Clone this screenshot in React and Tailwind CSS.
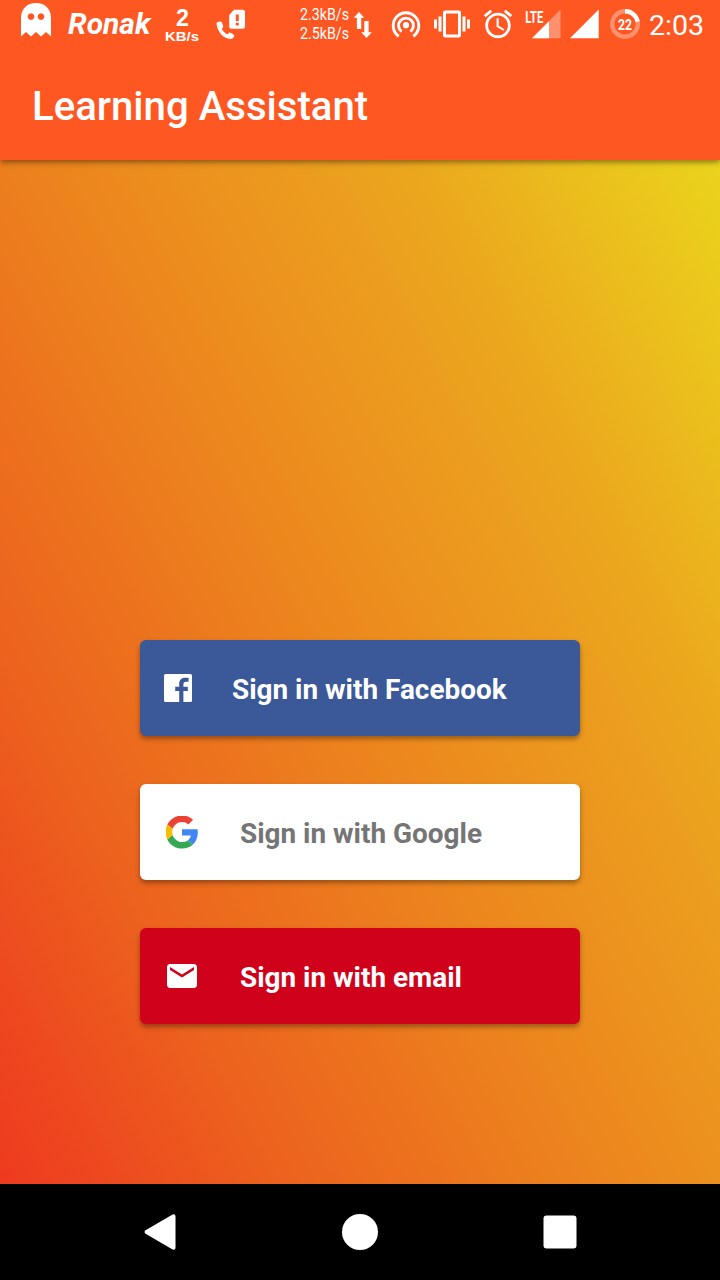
import { MdVibration, MdAlarm, MdEmail } from "react-icons/md";

function Ghost() {
  return (
    <svg className="ml-[21px] h-[48px] w-[30px] shrink-0" viewBox="0 0 30 48" fill="#fff">
      <path fillRule="evenodd" d="M0 36.500V18C0 9 6 3 15 3s15 6 15 15v18.500l-5-4.500-5 4.500-5-4.500-5 4.500-5-4.500zM10 13.200a3.400 3.400 0 1 0 .01 0zM20 13.200a3.400 3.400 0 1 0 .01 0z" />
    </svg>
  );
}

function NetSpeed() {
  return (
    <svg className="ml-[12px] h-[48px] w-[36px] shrink-0" viewBox="0 0 36 48" fill="#fff" fontFamily="Liberation Sans, sans-serif">
      <text x="12" y="25.800" fontSize="24.500" fontWeight="700" textLength="13" lengthAdjust="spacingAndGlyphs">2</text>
      <text x="1" y="41" fontSize="13.500" fontWeight="700" textLength="34" lengthAdjust="spacingAndGlyphs">KB/s</text>
    </svg>
  );
}

function CallSim() {
  return (
    <svg className="ml-[16px] h-[48px] w-[30px] shrink-0" viewBox="0 0 30 48" fill="#fff">
      <path fillRule="evenodd" d="M18 9.800H26.500q2.500 0 2.500 2.200V26.500q0 2.300-2.500 2.300H15.500q-2.300 0-2.300-2.300V15zM19.800 14.500v6.500h3v-6.500zM19.800 22.800v2.800h3v-2.800z" />
      <path d="M2.500 21.800l2-.3q1 0 1.400 1l1.300 3.600q.2.900-.4 1.500l-1 1.600q2.200 3.400 5.200 5.200l2-1.500q.7-.5 1.500-.1l3 1.600q.9.600.7 1.600l-.8 1.600q-.8 1.400-2.600 1.400-6.200-.2-10.200-5.200Q1 29.300.4 23.800q0-1.700 2.100-2z" />
    </svg>
  );
}

function Arrows() {
  return (
    <svg className="ml-[3px] h-[48px] w-[20px] shrink-0" viewBox="0 0 20 48" fill="#fff">
      <path d="M6 12L11.300 17.800H8.200V29H3.900V17.800H.7zM13.500 38L8.200 32.200h3.100V21h4.300v11.200h3.200z" />
    </svg>
  );
}

function Hotspot() {
  return (
    <svg className="ml-[18px] h-[48px] w-[30px] shrink-0" viewBox="0 0 30 48" fill="none" stroke="#fff" strokeWidth="2.900">
      <circle cx="15" cy="25.200" r="3.100" fill="#fff" stroke="none" />
      <path d="M10.700 31.500a7.400 7.400 0 1 1 8.600 0M7.800 36.200a12.800 12.800 0 1 1 14.400 0" />
    </svg>
  );
}

function Signals() {
  return (
    <svg className="ml-[10px] h-[48px] w-[76px] shrink-0" viewBox="0 0 76 48" fill="#fff">
      <path d="M35.500 9.500V38.200H7z" opacity=".35" />
      <path d="M24 21.200V38.200H7zM73.700 9.500V38.200H45z" />
      <path d="M0 9h19v14.500H0z" fill="#ff5722" />
      <text x="0.300" y="22.500" fontFamily="Roboto" fontWeight="700" fontSize="17" textLength="18" lengthAdjust="spacingAndGlyphs">LTE</text>
    </svg>
  );
}

function Battery() {
  return (
    <svg className="ml-[9px] h-[48px] w-[30px] shrink-0" viewBox="0 0 30 48" fill="none">
      <circle cx="15" cy="24" r="12.800" stroke="#fff" strokeOpacity=".35" strokeWidth="4.400" />
      <path d="M15 11.200A12.800 12.800 0 0 1 27.600 21.600" stroke="#fff" strokeWidth="4.400" />
      <text x="15" y="30" fill="#fff" textAnchor="middle" fontFamily="Roboto" fontWeight="700" fontSize="14.500" textLength="14" lengthAdjust="spacingAndGlyphs">22</text>
    </svg>
  );
}

function StatusBar() {
  return (
    <div className="flex h-[48px] items-center text-white">
      <Ghost />
      <span className="ml-[17px] w-[84px] shrink-0 text-[30px] leading-[48px] font-bold italic whitespace-nowrap">Ronak</span>
      <NetSpeed />
      <CallSim />
      <div className="ml-[54px] w-[50px] shrink-0 text-[16px] leading-[19px]">
        <div className="w-max origin-left scale-x-[.89]">2.3kB/s</div>
        <div className="w-max origin-left scale-x-[.89]">2.5kB/s</div>
      </div>
      <Arrows />
      <Hotspot />
      <MdVibration className="ml-[13px] shrink-0" size={36} />
      <MdAlarm className="ml-[11px] shrink-0" size={34} />
      <Signals />
      <Battery />
      <span className="ml-[9px] pt-[3px] text-[28.500px] leading-[50px]">2:03</span>
    </div>
  );
}

function FacebookIcon() {
  return (
    <svg className="ml-[24px] size-[28px]" viewBox="0 0 28 28" fill="#fff">
      <path d="M1.600 0H26.400Q28 0 28 1.600V26.400Q28 28 26.400 28H19.400V17h4.400V12.800H19.400V10.500c0-1.700.8-2.700 2.600-2.700H24.600V3.800H21c-3.600 0-5.800 2.400-5.800 6v3H11.200V17h4v11H1.600Q0 28 0 26.400V1.600Q0 0 1.600 0z" />
    </svg>
  );
}

function GoogleIcon() {
  return (
    <svg className="ml-[25px] size-[34px] p-[0.500px]" viewBox="0 0 48 48">
      <path fill="#EA4335" d="M24 9.500c3.540 0 6.710 1.220 9.210 3.600l6.850-6.850C35.900 2.380 30.470 0 24 0 14.620 0 6.510 5.380 2.560 13.220l7.980 6.190C12.430 13.720 17.740 9.500 24 9.500z" />
      <path fill="#4285F4" d="M46.980 24.550c0-1.570-.15-3.090-.38-4.550H24v9.020h12.940c-.58 2.960-2.260 5.480-4.780 7.180l7.730 6c4.510-4.180 7.090-10.360 7.090-17.650z" />
      <path fill="#FBBC05" d="M10.530 28.590c-.48-1.450-.76-2.990-.76-4.590s.27-3.140.76-4.590l-7.980-6.190C.92 16.460 0 20.120 0 24c0 3.880.92 7.540 2.560 10.780l7.970-6.190z" />
      <path fill="#34A853" d="M24 48c6.480 0 11.930-2.130 15.890-5.810l-7.730-6c-2.150 1.450-4.920 2.300-8.160 2.300-6.260 0-11.570-4.220-13.470-9.910l-7.980 6.190C6.510 42.620 14.620 48 24 48z" />
    </svg>
  );
}

function SignInButton({ className, textClass, icon, children }) {
  return (
    <button className={`flex h-24 w-[440px] items-center rounded-[6px] shadow-[0_3px_5px_rgba(0,0,0,0.35)] ${className}`}>
      {icon}
      <span className={`pt-[3px] text-[27.930px] leading-8 font-bold whitespace-nowrap ${textClass}`}>{children}</span>
    </button>
  );
}

export default function App() {
  return (
    <div className="flex h-[1280px] w-[720px] flex-col overflow-hidden font-['Roboto',sans-serif]">
      <header className="z-10 h-40 shrink-0 bg-[#ff5722] shadow-[0_2px_6px_rgba(0,0,0,0.45)]">
        <StatusBar />
        <h1 className="pl-8 text-[40.150px] leading-[118px] font-medium text-white">Learning Assistant</h1>
      </header>
      <main className="flex flex-1 flex-col items-center gap-12 bg-linear-[62deg,#ee3a20_0%,#ec611e_22%,#ec841e_47%,#eba61e_75%,#ead41c_100%] pt-[480px]">
        <SignInButton className="bg-[#3b5998] text-white" textClass="ml-[40px]" icon={<FacebookIcon />}>Sign in with Facebook</SignInButton>
        <SignInButton className="bg-white text-[#757575]" textClass="ml-[41px]" icon={<GoogleIcon />}>Sign in with Google</SignInButton>
        <SignInButton className="bg-[#d0021b] text-white" textClass="ml-[40px]" icon={<MdEmail className="ml-[24px]" size={36} />}>Sign in with email</SignInButton>
      </main>
      <nav className="flex h-24 shrink-0 items-center bg-black">
        <svg className="ml-[144px] h-[36px] w-[32px]" viewBox="0 0 32 36" fill="#fff">
          <path d="M1.600 16.200L28.600.4Q31.500-.5 31.500 2.500V33.500Q31.500 36.500 28.600 35.600L1.600 19.800Q-.5 18 1.600 16.200z" />
        </svg>
        <span className="ml-[166px] size-[36px] rounded-full bg-white" />
        <svg className="ml-[165px] size-[34px]" viewBox="0 0 34 34" fill="#fff">
          <rect x="0.500" y="0.500" width="33" height="33" rx="3" />
        </svg>
      </nav>
    </div>
  );
}
